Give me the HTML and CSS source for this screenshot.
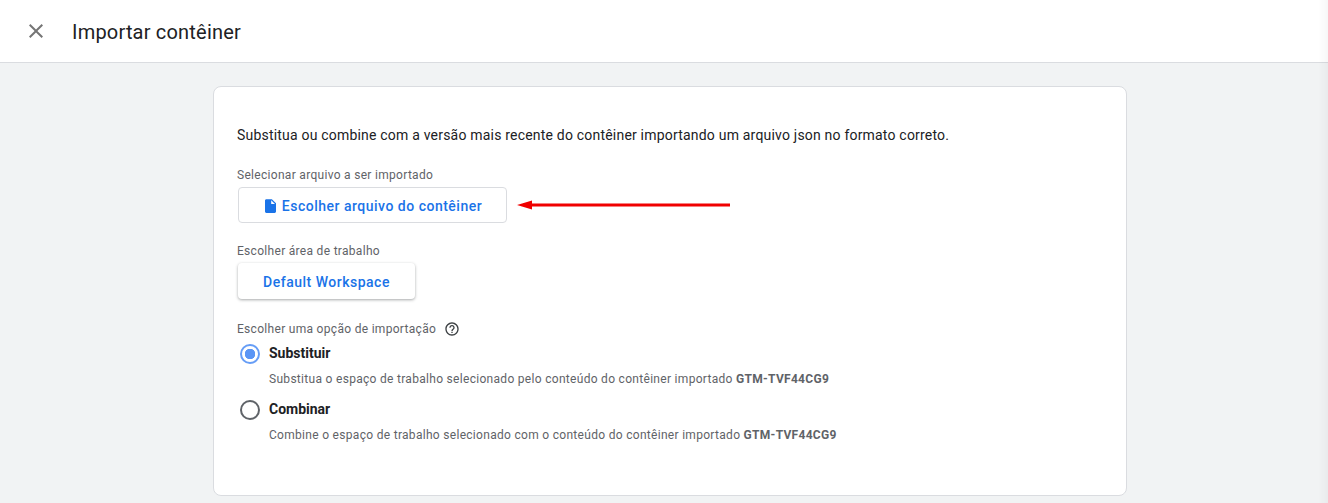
FILE: index.html
```html
<!DOCTYPE html>
<html lang="pt-BR">
<head>
<meta charset="utf-8">
<title>Importar contêiner</title>
<link rel="stylesheet" href="styles.css">
</head>
<body>
<header class="topbar">
  <svg class="close" width="24" height="24" viewBox="0 0 24 24" aria-hidden="true"><path d="M19 6.41 17.59 5 12 10.59 6.41 5 5 6.41 10.59 12 5 17.59 6.41 19 12 13.41 17.59 19 19 17.59 13.41 12z"/></svg>
  <h1 class="title">Importar contêiner</h1>
</header>
<main class="content">
  <section class="card">
    <p class="intro">Substitua ou combine com a versão mais recente do contêiner importando um arquivo json no formato correto.</p>
    <div class="label label-file">Selecionar arquivo a ser importado</div>
    <div class="file-row">
      <button class="file-btn" type="button">
        <svg width="11" height="14" viewBox="4 2 16 20" aria-hidden="true"><path fill-rule="evenodd" d="M6 2c-1.100 0-2 .9-2 2v16c0 1.100.9 2 2 2h12c1.100 0 2-.9 2-2V8l-6-6H6zm7 7V3.500L18.500 9H13z"/></svg>
        <span>Escolher arquivo do contêiner</span>
      </button>
      <svg class="arrow" width="214" height="10" viewBox="0 0 214 10" aria-hidden="true"><path d="M0 5 15 .5V3.500H213V6.500H15V9.500z"/></svg>
    </div>
    <div class="label label-workspace">Escolher área de trabalho</div>
    <button class="workspace-btn" type="button">Default Workspace</button>
    <div class="label label-option">
      <span>Escolher uma opção de importação</span>
      <svg class="help" width="16" height="16" viewBox="0 0 24 24" aria-hidden="true"><path d="M11 18h2v-2h-2v2zm1-16C6.480 2 2 6.480 2 12s4.480 10 10 10 10-4.480 10-10S17.520 2 12 2zm0 18c-4.410 0-8-3.590-8-8s3.590-8 8-8 8 3.590 8 8-3.590 8-8 8zm0-14c-2.210 0-4 1.790-4 4h2c0-1.100.9-2 2-2s2 .9 2 2c0 2-3 1.750-3 5h2c0-2.250 3-2.500 3-5 0-2.210-1.790-4-4-4z"/></svg>
    </div>
    <div class="option">
      <span class="radio radio-on"></span>
      <div class="option-body">
        <div class="option-name">Substituir</div>
        <div class="option-desc">Substitua o espaço de trabalho selecionado pelo conteúdo do contêiner importado <b>GTM-TVF44CG9</b></div>
      </div>
    </div>
    <div class="option">
      <span class="radio"></span>
      <div class="option-body">
        <div class="option-name">Combinar</div>
        <div class="option-desc">Combine o espaço de trabalho selecionado com o conteúdo do contêiner importado <b>GTM-TVF44CG9</b></div>
      </div>
    </div>
  </section>
</main>
<div class="edge-shade"></div>
</body>
</html>
```
FILE: styles.css
```css
* { box-sizing: border-box; }
html, body { margin: 0; height: 100%; }
body {
  height: 503px;
  overflow: hidden;
  background: #f1f3f4;
  font-family: Roboto, "Liberation Sans", sans-serif;
  color: #202124;
}
.topbar {
  height: 63px;
  background: #fff;
  border-bottom: 1px solid #dadce0;
  display: flex;
  align-items: center;
  padding-left: 24px;
}
.close { fill: #757575; flex: none; }
.title {
  margin: 2px 0 0 24px;
  font-size: 20px;
  font-weight: 400;
  letter-spacing: 0.2px;
  line-height: 24px;
  color: #202124;
}
.content { display: flex; justify-content: center; padding: 23px 0 0 12px; }
.card {
  width: 914px;
  height: 410px;
  background: #fff;
  border: 1px solid #dadce0;
  border-radius: 8px;
  padding: 38px 23px 0;
}
.intro {
  margin: 0;
  font-size: 14px;
  line-height: 20px;
  letter-spacing: 0.2px;
  color: #202124;
}
.label {
  font-size: 12px;
  line-height: 16px;
  letter-spacing: 0.3px;
  color: #5f6368;
}
.label-file { margin-top: 22px; }
.file-row { display: flex; align-items: center; margin-top: 4px; }
.file-btn {
  width: 269px;
  height: 36px;
  margin-left: 1px;
  background: #fff;
  border: 1px solid #dadce0;
  border-radius: 4px;
  display: flex;
  align-items: center;
  justify-content: center;
  gap: 6px;
  padding: 2px 0 0 2px;
  font: 500 14px/20px Roboto, "Liberation Sans", sans-serif;
  letter-spacing: 0.5px;
  color: #1a73e8;
}
.file-btn svg { fill: #1a73e8; }
.arrow { margin-left: 10px; fill: #f00000; }
.label-workspace { margin-top: 20px; }
.workspace-btn {
  display: block;
  width: 177px;
  height: 36px;
  margin: 4px 0 0 1px;
  background: #fff;
  border: 0;
  border-radius: 4px;
  box-shadow: 0 1px 3px rgba(60, 64, 67, .45);
  font: 500 14px/20px Roboto, "Liberation Sans", sans-serif;
  letter-spacing: 0.5px;
  color: #1a73e8;
  padding: 2px 0 0;
}
.label-option {
  margin-top: 22px;
  display: flex;
  align-items: center;
  gap: 8px;
}
.help { fill: #3c4043; }
.option { display: flex; align-items: flex-start; padding-left: 3px; }
.option + .option { margin-top: 12px; }
.label-option + .option { margin-top: 6px; }
.radio {
  width: 20px;
  height: 20px;
  border: 2px solid #5f6368;
  border-radius: 50%;
  flex: none;
  margin-top: 1px;
  background: #fff;
}
.radio-on {
  border-color: #669df6;
  background: radial-gradient(circle, #5a95f5 0 5px, #fff 5.500px);
}
.option-body { margin-left: 9px; }
.option-name {
  font-size: 14px;
  line-height: 20px;
  font-weight: 700;
  color: #202124;
}
.option-desc {
  margin-top: 8px;
  font-size: 12px;
  line-height: 16px;
  letter-spacing: 0.3px;
  color: #5f6368;
}
.edge-shade {
  position: fixed;
  top: 0;
  right: 0;
  bottom: 0;
  width: 10px;
  background: linear-gradient(to right, rgba(0,0,0,0), rgba(0,0,0,.03));
  pointer-events: none;
}
```
